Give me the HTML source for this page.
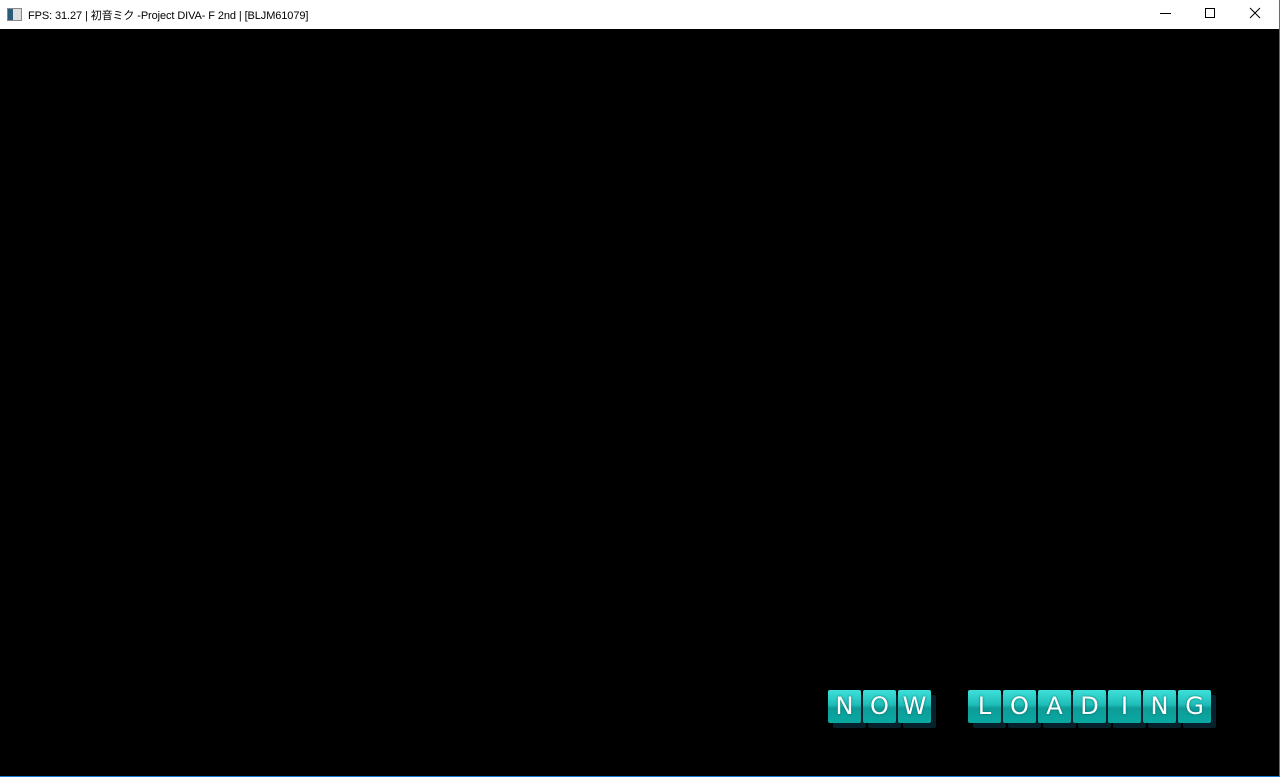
<!DOCTYPE html>
<html><head><meta charset="utf-8"><style>
body{margin:0;width:1280px;height:777px;overflow:hidden;background:#000;position:relative;font-family:"Liberation Sans","Noto Sans CJK JP",sans-serif}
#tb{position:absolute;left:0;top:0;width:1279px;height:29px;background:#fff}
#tt{position:absolute;left:28px;top:7px;font-size:11px;color:#000;letter-spacing:-0.1px}
#ic{position:absolute;left:7px;top:8px;width:13px;height:11px;border:1px solid #888;background:linear-gradient(90deg,#2a5a7a 40%,#ddd 40%)}
#rb{position:absolute;right:0;top:0;width:1px;height:777px;background:#1a7fd4}
#bb{position:absolute;left:0;bottom:0;width:1280px;height:1px;background:#1a7fd4}
.t{position:absolute;top:690px;width:33px;height:33px;background:linear-gradient(180deg,#3fe0da 0%,#1fbdb8 45%,#0e9c98 55%,#0aa8a2 100%);box-shadow:5px 5px 0 #06202c;color:#fff;font:normal 24px/33px "DejaVu Sans",sans-serif;text-align:center;border-radius:2px;text-shadow:0 0 2px #066}
</style></head><body>
<div id="tb"><div id="ic"></div><div id="tt">FPS: 31.27 | 初音ミク -Project DIVA- F 2nd | [BLJM61079]</div>
<svg style="position:absolute;left:1150px;top:0" width="130" height="29"><path d="M10 13.5H21" stroke="#000"/><rect x="55.5" y="8.5" width="9" height="9" fill="none" stroke="#000"/><path d="M100 8L110 18M110 8L100 18" stroke="#000"/></svg></div>
<div class="t" style="left:828px">N</div><div class="t" style="left:863px">O</div><div class="t" style="left:898px">W</div>
<div class="t" style="left:968px">L</div><div class="t" style="left:1003px">O</div><div class="t" style="left:1038px">A</div><div class="t" style="left:1073px">D</div><div class="t" style="left:1108px">I</div><div class="t" style="left:1143px">N</div><div class="t" style="left:1178px">G</div>
<div id="rb"></div><div id="bb"></div>
</body></html>
